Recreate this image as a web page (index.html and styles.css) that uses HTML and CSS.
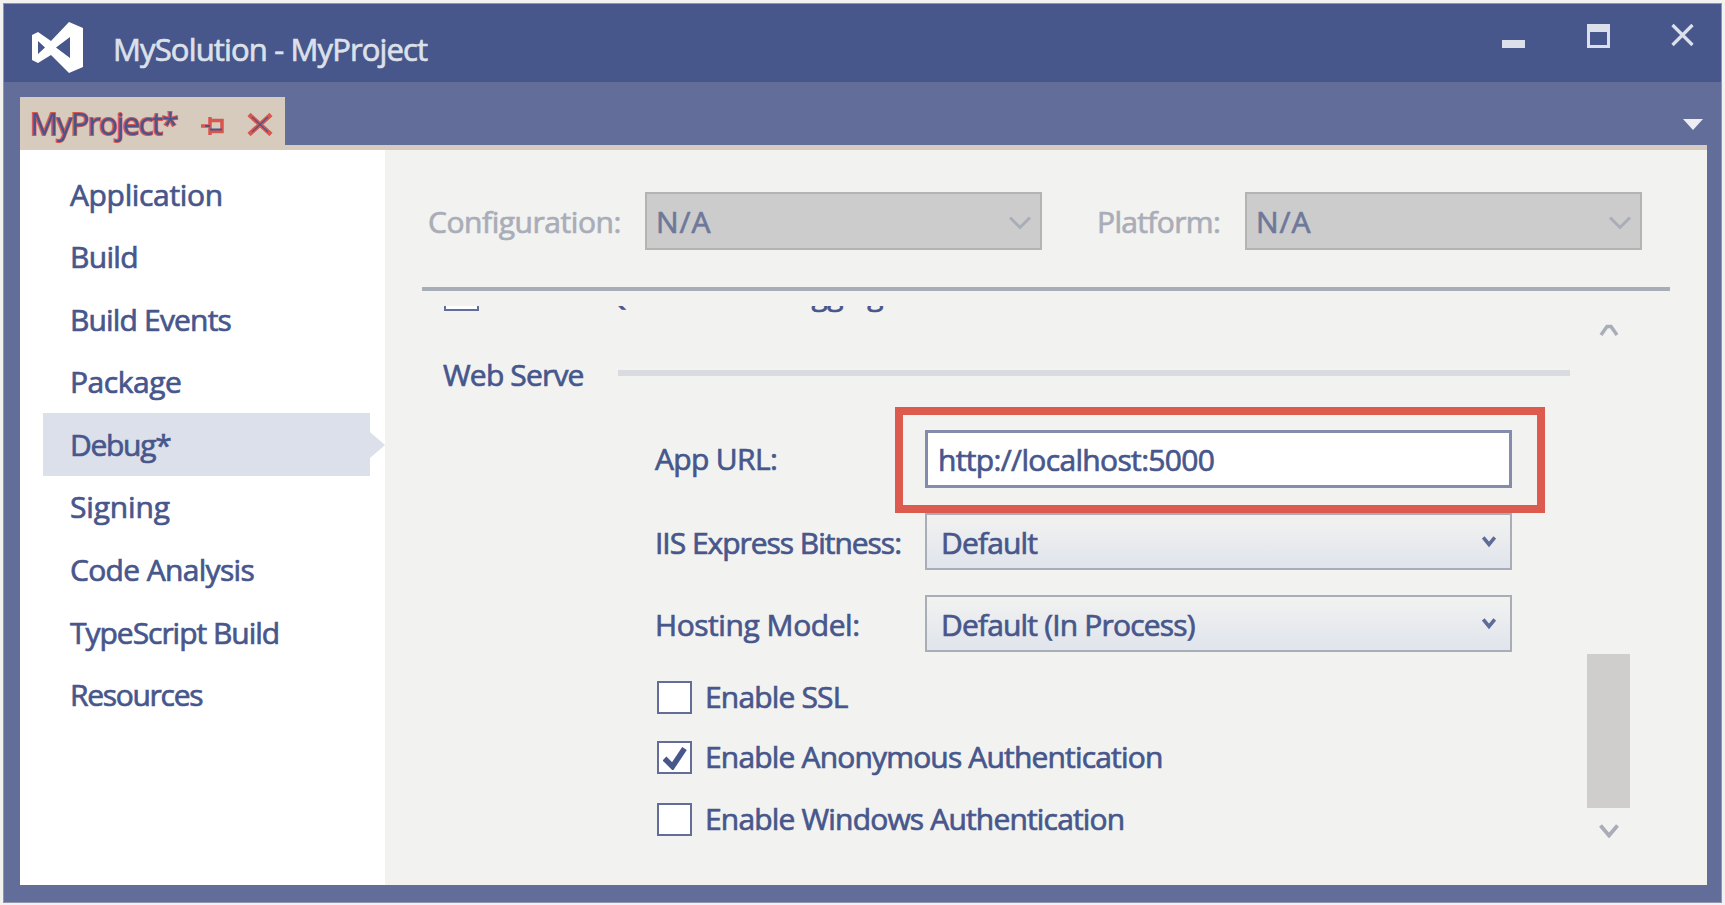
FILE: index.html
```html
<!DOCTYPE html>
<html lang="en">
<head>
<meta charset="utf-8">
<title>MySolution - MyProject</title>
<link rel="stylesheet" href="styles.css">
</head>
<body>
<div class="window">
  <header class="titlebar">
    <svg class="logo" width="51" height="51" viewBox="0 0 51 51"><path fill="#fff" fill-rule="evenodd" d="M37 0L51 6V45L37 51L19 33L6 41L0 38V13L6 10L19 19ZM38 15L24 25.500L38 36ZM6 19V32L13 25.500Z"/></svg>
    <h1 class="title">MySolution - MyProject</h1>
    <div class="controls">
      <svg width="24" height="26" viewBox="0 0 24 26"><path fill="#dce0ea" d="M0 17h23v8H0z"/></svg>
      <svg width="24" height="26" viewBox="0 0 24 26"><path fill="#dce0ea" fill-rule="evenodd" d="M0 1h23v24H0zM3 9v13h17V9z"/></svg>
      <svg width="24" height="26" viewBox="0 0 24 26"><path stroke="#dce0ea" stroke-width="3.200" d="M1.500 2l20 20M21.500 2l-20 20"/></svg>
    </div>
  </header>
  <div class="tabstrip">
    <div class="tab">
      <span class="tab-name">MyProject*</span>
      <svg class="pin" width="23" height="20" viewBox="0 0 23 20"><path fill="none" stroke="#d9564f" stroke-width="3.500" d="M0 10h8M9 1v18M9 4.500h12v11H9"/><path stroke="#47578c" stroke-width="2" d="M9 13.500h12M4 10h5"/></svg>
      <svg class="close" width="26" height="23" viewBox="0 0 26 23"><path stroke="#d9564f" stroke-width="4.500" d="M2 1.500l22 20M24 1.500l-22 20"/><path stroke="#47578c" stroke-width="1.200" d="M5 4l16 15M21 4L5 19"/></svg>
    </div>
    <svg class="more" width="20" height="11" viewBox="0 0 20 11"><path fill="#eceef3" d="M0 0h20L10 11z"/></svg>
  </div>
  <main class="content">
    <nav class="sidebar">
      <a class="item app">Application</a>
      <a class="item">Build</a>
      <a class="item snug">Build Events</a>
      <a class="item semi">Package</a>
      <a class="item active tight">Debug*</a>
      <a class="item loose">Signing</a>
      <a class="item">Code Analysis</a>
      <a class="item cozy">TypeScript Build</a>
      <a class="item tight">Resources</a>
    </nav>
    <section class="panel">
      <div class="config">
        <span class="muted label-config semi">Configuration:</span>
        <div class="combo disabled"><span>N/A</span><svg width="22" height="14" viewBox="0 0 22 14"><path fill="none" stroke="#a9adb8" stroke-width="3" d="M1 1.500l10 10l10-10"/></svg></div>
        <span class="muted label-platform">Platform:</span>
        <div class="combo disabled"><span>N/A</span><svg width="22" height="14" viewBox="0 0 22 14"><path fill="none" stroke="#a9adb8" stroke-width="3" d="M1 1.500l10 10l10-10"/></svg></div>
      </div>
      <div class="scroller">
        <div class="page">
          <div class="check cut"><i class="box"></i><span>Enable SQL Server debugging</span></div>
          <div class="group"><span class="group-name snug">Web Serve</span><i class="rule"></i></div>
          <div class="form">
            <span class="label first">App URL:</span>
            <div class="highlight"><div class="input">http://localhost:5000</div></div>
            <span class="label cozy">IIS Express Bitness:</span>
            <div class="combo snug"><span>Default</span><svg width="14" height="12" viewBox="0 0 14 12"><path fill="none" stroke="#5f6b99" stroke-width="3.600" d="M1.200 1.500L7 8.500l5.800-7"/></svg></div>
            <span class="label semi">Hosting Model:</span>
            <div class="combo snug"><span>Default (In Process)</span><svg width="14" height="12" viewBox="0 0 14 12"><path fill="none" stroke="#5f6b99" stroke-width="3.600" d="M1.200 1.500L7 8.500l5.800-7"/></svg></div>
          </div>
          <div class="checks snug">
            <div class="check"><i class="box"></i><span>Enable SSL</span></div>
            <div class="check"><i class="box"><svg width="24" height="24" viewBox="0 0 24 24"><path fill="none" stroke="#47578c" stroke-width="5.500" d="M1.500 12.500l8 8L21.500 2.500"/></svg></i><span>Enable Anonymous Authentication</span></div>
            <div class="check last"><i class="box"></i><span>Enable Windows Authentication</span></div>
          </div>
        </div>
        <div class="scrollbar">
          <svg width="20" height="12" viewBox="0 0 20 12"><path fill="none" stroke="#a9adb8" stroke-width="3.500" d="M2 11L8 2.500h4L18 11"/></svg>
          <i class="thumb"></i>
          <svg width="20" height="14" viewBox="0 0 20 14"><path fill="none" stroke="#a9adb8" stroke-width="3.800" d="M1.500 1.500L10 11.500l8.500-10"/></svg>
        </div>
      </div>
    </section>
  </main>
</div>
</body>
</html>
```
FILE: styles.css
```css
* { box-sizing: border-box; }
body {
  margin: 0;
  padding: 3px;
  height: 905px;
  overflow: hidden;
  background: #f2f2f0;
  font: 30px/40px "Open Sans", "Noto Sans", sans-serif;
  letter-spacing: -0.66px;
  color: #47578c;
  -webkit-text-stroke: 0.7px currentColor;
}
svg, i { display: block; flex: none; }
.loose { letter-spacing: -0.15px; }
.app { letter-spacing: -0.35px; }
.semi { letter-spacing: -0.45px; }
.snug { letter-spacing: -0.83px; }
.cozy { letter-spacing: -1.03px; }
.tight { letter-spacing: -1.3px; }
.window {
  width: 1719px;
  height: 900px;
  display: flex;
  flex-direction: column;
  background: #626d99;
  border: 1px solid #8f95ad;
}
.titlebar {
  height: 78px;
  display: flex;
  align-items: flex-start;
  background: #47578c;
}
.logo { margin: 18px 0 0 28px; }
.title {
  margin: 25px 0 0 30px;
  font-size: 31px;
  font-weight: 400;
  letter-spacing: -0.85px;
  color: #dce0ea;
  white-space: nowrap;
}
.controls {
  display: flex;
  gap: 60.500px;
  margin: 19px 26px 0 auto;
}
.tabstrip {
  height: 68px;
  flex: none;
  padding: 15px 14px 0 16px;
  display: flex;
  justify-content: space-between;
  align-items: flex-start;
  background: linear-gradient(#626d99 63px, #d6cbbd 63px) no-repeat 16px 0 / 1687px 68px;
}
.tab {
  width: 265px;
  height: 53px;
  padding: 6px 0 0 10px;
  display: flex;
  background: #d6cbbd;
}
.tab-name {
  width: 171px;
  font-size: 31px;
  letter-spacing: -1.45px;
  -webkit-text-stroke: 2px #d9564f;
  paint-order: stroke fill;
}
.pin { margin-top: 13px; }
.close { margin: 10px 0 0 23px; }
.more { margin: 22px 4px 0 0; }
.content {
  height: 735px;
  margin: 0 14px 0 16px;
  display: flex;
  background: #f2f2f0;
}
.sidebar {
  width: 365px;
  flex: none;
  padding: 13px 15px 0 23px;
  background: #fff;
}
.item {
  display: block;
  height: 62.600px;
  padding: 11.500px 0 0 27px;
}
.active {
  position: relative;
  background: #dce0ea;
}
.active::after {
  content: "";
  position: absolute;
  left: 100%;
  top: 19px;
  border: solid transparent;
  border-width: 13px 0 13px 15px;
  border-left-color: #dce0ea;
}
.panel { flex: 1; padding: 42px 0 0 37px; }
.config {
  width: 1248px;
  height: 99px;
  display: flex;
  align-items: flex-start;
  border-bottom: 4px solid #a9adb8;
}
.muted { color: #a9adb8; padding: 10px 0 0 6px; }
.label-config { width: 223px; }
.label-platform { width: 154px; margin-left: 49px; }
.combo {
  height: 58px;
  padding: 7px 14px 0 14px;
  display: flex;
  justify-content: space-between;
  border: 2px solid #a9adb8;
  background: linear-gradient(#f2f2f0, #e0e4ec);
}
.combo svg { margin-top: 13px; }
.disabled {
  width: 397px;
  padding: 8px 9px 0 9px;
  background: #cccccd;
  border-color: #b5b4b5;
  color: #6f7899;
  letter-spacing: 1px;
}
.disabled svg { margin-top: 14px; }
.scroller { height: 578px; margin-top: 15px; display: flex; overflow: hidden; }
.page { width: 1148px; padding-left: 21px; }
.check { display: flex; gap: 13px; align-items: center; height: 40px; white-space: nowrap; }
.box {
  width: 35px;
  height: 33px;
  padding: 3px 0 0 4px;
  background: #fff;
  border: 2px solid #626d99;
}
.cut { margin-top: -32px; padding-left: 1px; letter-spacing: -0.7px; }
.group { display: flex; height: 93px; padding-top: 41px; }
.group-name { width: 175px; }
.rule { flex: 1; height: 6px; margin-top: 15px; background: #dadbe0; }
.form {
  display: grid;
  grid-template-columns: 240px 650px;
  margin-left: 212px;
  align-items: start;
}
.label { padding-top: 10px; white-space: nowrap; }
.label.first { padding-top: 32px; }
.highlight {
  position: relative;
  height: 106px;
  padding: 15px 25px 13px 22px;
  border: 8px solid #dd5a4f;
}
.input { height: 58px; padding: 7px 10px; border: 3px solid #848bab; background: #fff; }
.form .combo { height: 57px; margin: 0 33px 25px 30px; padding-top: 8px; }
.checks { display: grid; gap: 20px; margin-left: 214px; }
.last { margin-top: 2px; }
.scrollbar {
  width: 43px;
  margin-left: 17px;
  padding-top: 18px;
  display: flex;
  flex-direction: column;
  align-items: center;
}
.thumb { width: 43px; height: 154px; margin: 318px 0 16px; background: #cfcecd; }
```
